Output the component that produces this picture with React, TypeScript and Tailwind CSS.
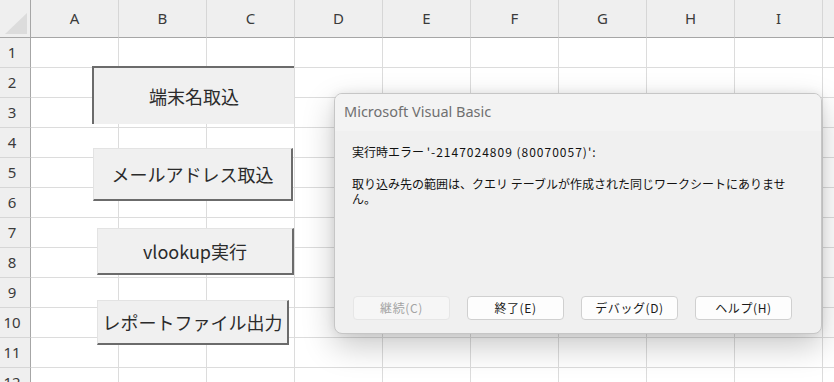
import React from "react"

const cols = ["A", "B", "C", "D", "E", "F", "G", "H", "I", ""]
const rows = [1, 2, 3, 4, 5, 6, 7, 8, 9, 10, 11, 12]

const ui = "font-['Noto_Sans','Noto_Sans_CJK_JP',sans-serif]"
const jp = "font-['Noto_Sans_CJK_JP','Noto_Sans',sans-serif]"

function SheetGrid() {
  return (
    <div className="grid grid-cols-[31px_repeat(10,88px)] grid-rows-[38px_repeat(12,30px)]">
      {/* corner with the select-all triangle */}
      <div className="relative border-r border-b border-[#a6a6a6] bg-[#efefef]">
        <svg className="absolute left-[5px] top-[13px]" width="22" height="21" viewBox="0 0 22 21">
          <polygon points="22,0 22,21 0,21" fill="#dcdcdc" />
        </svg>
      </div>
      {cols.map((c, i) => (
        <div
          key={i}
          className={`flex items-center justify-center border-b border-[#a6a6a6] bg-[#efefef] text-[15px] text-[#3b3b3b] ${ui} ${
            i < cols.length - 1 ? "border-r border-r-[#d6d6d6]" : ""
          }`}
        >
          {c}
        </div>
      ))}
      {rows.map((r) => (
        <React.Fragment key={r}>
          <div
            className={`flex items-center justify-center pr-[6px] border-r border-r-[#a6a6a6] border-b border-b-[#d6d6d6] bg-[#efefef] text-[15px] text-[#3b3b3b] ${ui}`}
          >
            {r}
          </div>
          {cols.map((_, i) => (
            <div key={i} className="border-r border-b border-[#dcdcdc] bg-white" />
          ))}
        </React.Fragment>
      ))}
    </div>
  )
}

function SheetButton({
  label,
  pressed,
  className,
}: {
  label: string
  pressed?: boolean
  className: string
}) {
  return (
    <div
      className={`absolute flex items-center justify-center bg-[#f0f0f0] text-[18px] text-[#2b2b2b] ${jp} ${
        pressed
          ? "border-t-2 border-l-2 border-[#6b6b6b]"
          : "border-t border-l border-t-[#e3e3e3] border-l-[#e3e3e3] border-r-2 border-b-2 border-r-[#6b6b6b] border-b-[#6b6b6b]"
      } ${className}`}
    >
      {label}
    </div>
  )
}

function DialogButton({ label, disabled }: { label: string; disabled?: boolean }) {
  return (
    <div
      className={`flex h-[24px] w-[97px] items-center justify-center rounded-[4px] border text-[12px] tracking-[0.6px] ${jp} ${
        disabled
          ? "border-[#e6e6e6] bg-[#f6f6f6] text-[#a3a3a3]"
          : "border-[#d0d0d0] bg-[#fdfdfd] text-[#1b1b1b]"
      }`}
    >
      {label}
    </div>
  )
}

function ErrorDialog() {
  return (
    <div className="absolute left-[334px] top-[93px] flex h-[241px] w-[488px] flex-col overflow-hidden rounded-[8px] border border-[#c6c6c6] bg-[#f0f0f0] shadow-[0_12px_32px_rgba(0,0,0,0.22),0_0_10px_rgba(0,0,0,0.08)]">
      <div className={`h-[37px] shrink-0 bg-[#f3f3f3] pl-[9px] pt-[7px] text-[14.5px] text-[#707070] ${ui}`}>
        Microsoft Visual Basic
      </div>
      <div className={`flex-1 pl-[17px] pt-[13px] text-[12px] leading-[15px] text-[#111] ${jp}`}>
        <p>
          実行時エラー <span className="tracking-[1px]">'-2147024809 (80070057)':</span>
        </p>
        <p className="mt-[17px]">
          取り込み先の範囲は、クエリ テーブルが作成された同じワークシートにありませ
          <br />
          ん。
        </p>
      </div>
      <div className="flex gap-[17px] pb-[13px] pl-[18px]">
        <DialogButton label="継続(C)" disabled />
        <DialogButton label="終了(E)" />
        <DialogButton label="デバッグ(D)" />
        <DialogButton label="ヘルプ(H)" />
      </div>
    </div>
  )
}

export default function App() {
  return (
    <div className="relative h-[382px] w-[834px] overflow-hidden bg-white">
      <SheetGrid />
      <SheetButton label="端末名取込" pressed className="left-[92px] top-[66px] h-[58px] w-[202px]" />
      <SheetButton label="メールアドレス取込" className="left-[93px] top-[148px] h-[53px] w-[200px]" />
      <SheetButton label="vlookup実行" className="left-[97px] top-[228px] h-[47px] w-[197px]" />
      <SheetButton label="レポートファイル出力" className="left-[97px] top-[300px] h-[45px] w-[192px]" />
      <ErrorDialog />
    </div>
  )
}
